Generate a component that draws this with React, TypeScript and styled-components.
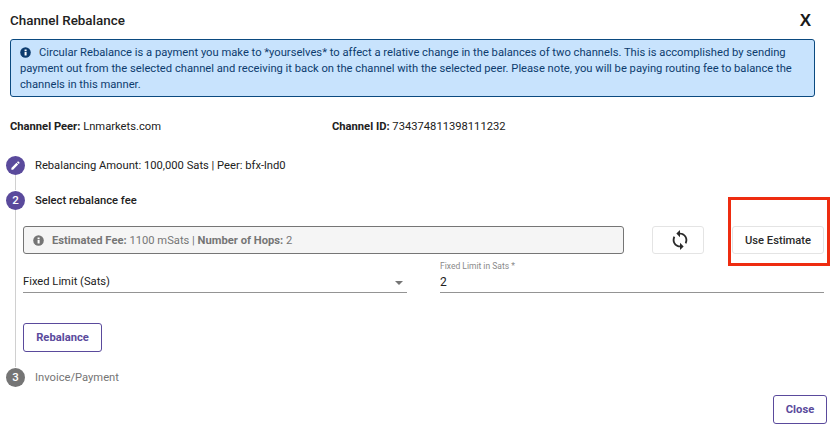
import React from 'react';
import styled, { createGlobalStyle } from 'styled-components';

const GlobalStyle = createGlobalStyle`
  html, body {
    margin: 0;
    padding: 0;
    background: #fff;
    font-family: 'Roboto', 'Liberation Sans', sans-serif;
  }
`;

const Dialog = styled.div`
  position: relative;
  width: 831px;
  height: 435px;
  overflow: hidden;
  box-sizing: border-box;
  padding: 0 4px 0 10px;
  color: #212121;
`;

const Header = styled.div`
  display: flex;
  align-items: center;
  justify-content: space-between;
  height: 39px;
  padding: 2px 16px 0 0;
  box-sizing: border-box;
`;

const Title = styled.h2`
  margin: 0;
  font-size: 13.4px;
  font-weight: 500;
  color: #212121;
`;

const CloseX = styled.span`
  font-family: 'Liberation Sans', sans-serif;
  font-size: 17px;
  font-weight: 700;
  color: #1a1a1a;
`;

const InfoAlert = styled.div`
  width: 805px;
  height: 58px;
  box-sizing: border-box;
  padding: 5px 9px;
  background: #c8e3fd;
  border: 1px solid #0b4a80;
  border-radius: 3px;
  color: #0d3c6e;
  font-size: 11.2px;
  line-height: 16px;
  white-space: nowrap;
`;

const AlertIcon = styled.svg`
  width: 11px;
  height: 11px;
  margin-right: 8px;
  vertical-align: -1.5px;
`;

const PeerRow = styled.div`
  display: flex;
  margin-top: 22px;
  height: 16px;
  font-size: 11.2px;
  line-height: 16px;
  color: #212121;
`;

const PeerCell = styled.div`
  width: 322px;
  b {
    font-weight: 700;
  }
`;

const Stepper = styled.div`
  margin: 20px 0 0 -4px;
`;

const Step = styled.div`
  display: flex;
  align-items: center;
  gap: 10px;
  height: 20px;
`;

const StepCircle = styled.div<{ $muted?: boolean }>`
  flex: none;
  width: 19px;
  height: 19px;
  border-radius: 50%;
  display: flex;
  align-items: center;
  justify-content: center;
  background: ${(p) => (p.$muted ? '#757575' : '#5a4a9c')};
  color: #fff;
  font-size: 11.5px;
  font-weight: 500;
`;

const StepLabel = styled.span<{ $active?: boolean; $muted?: boolean }>`
  font-size: 11.2px;
  font-weight: ${(p) => (p.$active ? 500 : 400)};
  color: ${(p) => (p.$muted ? '#757575' : '#212121')};
`;

const Connector = styled.div`
  margin-left: 9px;
  height: 15px;
  border-left: 1px solid #d0d0d0;
`;

const StepContent = styled.div`
  margin-left: 9px;
  height: 157px;
  box-sizing: border-box;
  border-left: 1px solid #d0d0d0;
  padding: 16px 0 0 7px;
`;

const EstimateRow = styled.div`
  display: flex;
  height: 28px;
`;

const EstimateBox = styled.div`
  width: 601px;
  box-sizing: border-box;
  display: flex;
  align-items: center;
  padding-left: 9px;
  background: #f5f5f5;
  border: 1px solid #757575;
  border-radius: 3px;
  font-size: 11.2px;
  color: #757575;
  b {
    font-weight: 700;
  }
`;

const GhostButton = styled.button<{ $width: number; $gap: number }>`
  width: ${(p) => p.$width}px;
  margin-left: ${(p) => p.$gap}px;
  padding: 0;
  display: flex;
  align-items: center;
  justify-content: center;
  background: #fff;
  border: 1px solid #e4e4e4;
  border-radius: 3px;
  font-family: inherit;
  font-size: 11.2px;
  font-weight: 500;
  color: #2a2a2a;
`;

const RefreshIcon = styled.svg`
  width: 22px;
  height: 22px;
  margin-left: 4px;
  fill: #2a2a2a;
`;

const LimitRow = styled.div`
  display: flex;
  gap: 33px;
  margin-top: 9px;
`;

const SelectField = styled.div`
  width: 384px;
  height: 30px;
  box-sizing: border-box;
  display: flex;
  align-items: flex-end;
  justify-content: space-between;
  padding: 0 4px 2px 0;
  border-bottom: 1px solid #949494;
  font-size: 11.2px;
  line-height: 16px;
  color: #212121;
`;

const SelectArrow = styled.span`
  width: 0;
  height: 0;
  margin-bottom: 5px;
  border-left: 4px solid transparent;
  border-right: 4px solid transparent;
  border-top: 4px solid #757575;
`;

const InputField = styled.div`
  width: 384px;
  height: 30px;
  box-sizing: border-box;
  border-bottom: 1px solid #949494;
  display: flex;
  flex-direction: column;
  justify-content: space-between;
  padding-bottom: 3px;
`;

const InputLabel = styled.span`
  margin-top: -2px;
  font-size: 8.5px;
  line-height: 10px;
  color: #8a8a8a;
`;

const InputValue = styled.span`
  font-size: 12px;
  line-height: 14px;
  color: #212121;
`;

const OutlineButton = styled.button<{ $width: number }>`
  display: block;
  width: ${(p) => p.$width}px;
  height: 29px;
  padding: 0;
  background: #fff;
  border: 1px solid #5a4a9c;
  border-radius: 3px;
  font-family: inherit;
  font-size: 11.2px;
  font-weight: 700;
  color: #5a4a9c;
`;

const RebalanceWrap = styled.div`
  margin-top: 30px;
`;

const Footer = styled.div`
  display: flex;
  justify-content: flex-end;
  margin-top: 8px;
`;

// red annotation drawn over the screenshot
const Highlight = styled.div`
  position: absolute;
  left: 728px;
  top: 197px;
  width: 102px;
  height: 69px;
  box-sizing: border-box;
  border: 3px solid #ee2c10;
`;

const InfoIcon: React.FC<{ color: string }> = ({ color }) => (
  <AlertIcon viewBox="0 0 24 24">
    <circle cx="12" cy="12" r="11.5" fill={color} />
    <rect x="10" y="10.5" width="4.4" height="8" fill="#fff" />
    <rect x="10" y="5.5" width="4.4" height="3.4" fill="#fff" />
  </AlertIcon>
);

const App: React.FC = () => {
  return (
    <Dialog>
      <GlobalStyle />
      <Header>
        <Title>Channel Rebalance</Title>
        <CloseX>X</CloseX>
      </Header>
      <InfoAlert>
        <InfoIcon color="#0d3c6e" />
        Circular Rebalance is a payment you make to *yourselves* to affect a relative change in the balances of two channels. This is accomplished by sending
        <br />
        payment out from the selected channel and receiving it back on the channel with the selected peer. Please note, you will be paying routing fee to balance the
        <br />
        channels in this manner.
      </InfoAlert>
      <PeerRow>
        <PeerCell>
          <b>Channel Peer:</b> Lnmarkets.com
        </PeerCell>
        <PeerCell>
          <b>Channel ID:</b> 734374811398111232
        </PeerCell>
      </PeerRow>
      <Stepper>
        <Step>
          <StepCircle>
            <svg width="11" height="11" viewBox="0 0 24 24" fill="#fff">
              <path d="M3 17.25V21h3.75L17.81 9.94l-3.75-3.75L3 17.25zM20.71 7.04a1 1 0 0 0 0-1.41l-2.34-2.34a1 1 0 0 0-1.41 0l-1.83 1.83 3.75 3.75 1.83-1.83z" />
            </svg>
          </StepCircle>
          <StepLabel>Rebalancing Amount: 100,000 Sats | Peer: bfx-lnd0</StepLabel>
        </Step>
        <Connector />
        <Step>
          <StepCircle>2</StepCircle>
          <StepLabel $active>Select rebalance fee</StepLabel>
        </Step>
        <StepContent>
          <EstimateRow>
            <EstimateBox>
              <InfoIcon color="#757575" />
              <span>
                <b>Estimated Fee:</b> 1100 mSats | <b>Number of Hops:</b> 2
              </span>
            </EstimateBox>
            <GhostButton $width={52} $gap={28}>
              <RefreshIcon viewBox="0 0 24 24">
                <path d="M12 4V1L8 5l4 4V6c3.31 0 6 2.69 6 6 0 1.01-.25 1.97-.7 2.8l1.46 1.46A7.93 7.93 0 0 0 20 12c0-4.42-3.58-8-8-8zm0 14c-3.31 0-6-2.69-6-6 0-1.01.25-1.97.7-2.8L5.24 7.74A7.93 7.93 0 0 0 4 12c0 4.42 3.58 8 8 8v3l4-4-4-4v3z" />
              </RefreshIcon>
            </GhostButton>
            <GhostButton $width={92} $gap={28}>Use Estimate</GhostButton>
          </EstimateRow>
          <LimitRow>
            <SelectField>
              Fixed Limit (Sats)
              <SelectArrow />
            </SelectField>
            <InputField>
              <InputLabel>Fixed Limit in Sats *</InputLabel>
              <InputValue>2</InputValue>
            </InputField>
          </LimitRow>
          <RebalanceWrap>
            <OutlineButton $width={79}>Rebalance</OutlineButton>
          </RebalanceWrap>
        </StepContent>
        <Step>
          <StepCircle $muted>3</StepCircle>
          <StepLabel $muted>Invoice/Payment</StepLabel>
        </Step>
      </Stepper>
      <Footer>
        <OutlineButton $width={54}>Close</OutlineButton>
      </Footer>
      <Highlight />
    </Dialog>
  );
};

export default App;
